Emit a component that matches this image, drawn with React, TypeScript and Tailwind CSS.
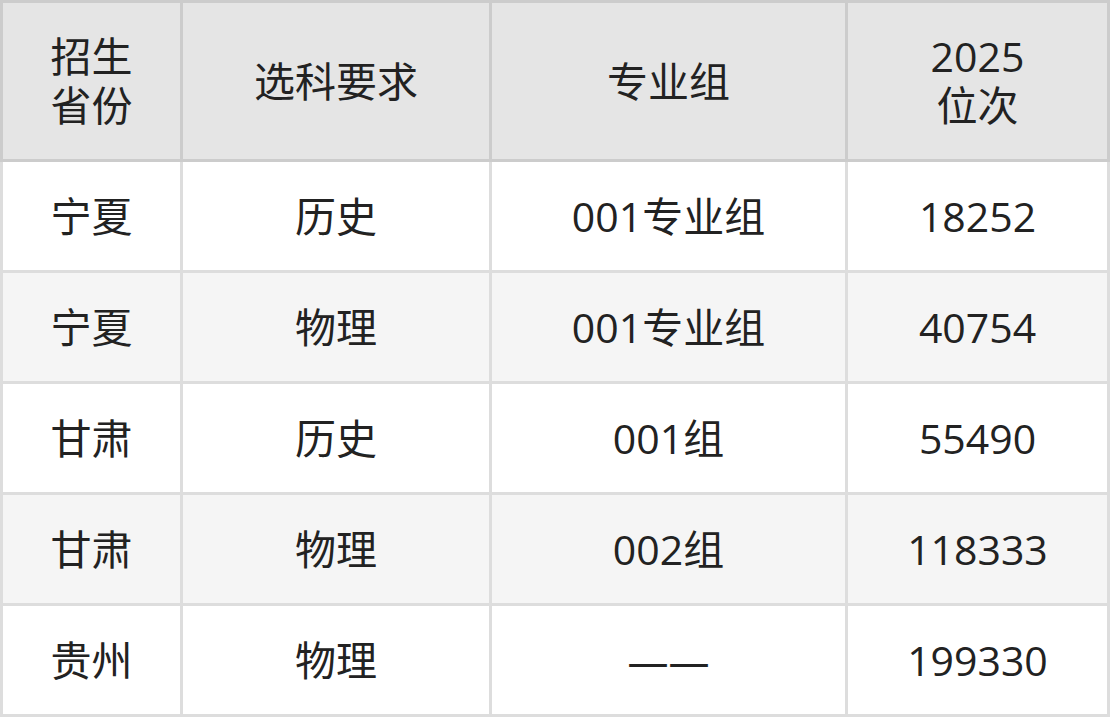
const rows = [
  ["宁夏", "历史", "001专业组", "18252"],
  ["宁夏", "物理", "001专业组", "40754"],
  ["甘肃", "历史", "001组", "55490"],
  ["甘肃", "物理", "002组", "118333"],
  ["贵州", "物理", "——", "199330"],
];

export default function App() {
  return (
    <div className="bg-white font-['Open_Sans','Noto_Sans_CJK_SC',sans-serif] text-[#222]">
      <table className="w-[1110px] table-fixed border-collapse text-center text-[41px] leading-[49px]">
        <colgroup>
          <col className="w-[180px]" />
          <col className="w-[309px]" />
          <col className="w-[356px]" />
          <col className="w-[262px]" />
        </colgroup>
        <thead>
          <tr className="h-[159px] bg-[#e5e5e5]">
            <th className="border-[3px] border-[#cccccc] font-normal">
              <div>招生</div>
              <div>省份</div>
            </th>
            <th className="border-[3px] border-[#cccccc] font-normal">选科要求</th>
            <th className="border-[3px] border-[#cccccc] font-normal">专业组</th>
            <th className="border-[3px] border-[#cccccc] font-normal">
              <div>2025</div>
              <div>位次</div>
            </th>
          </tr>
        </thead>
        <tbody>
          {rows.map((r, i) => (
            <tr key={i} className={`h-[111px] ${i % 2 === 1 ? "bg-[#f5f5f5]" : "bg-white"}`}>
              {r.map((c, j) => (
                <td key={j} className="border-[3px] border-[#dddddd]">
                  {c}
                </td>
              ))}
            </tr>
          ))}
        </tbody>
      </table>
    </div>
  );
}
